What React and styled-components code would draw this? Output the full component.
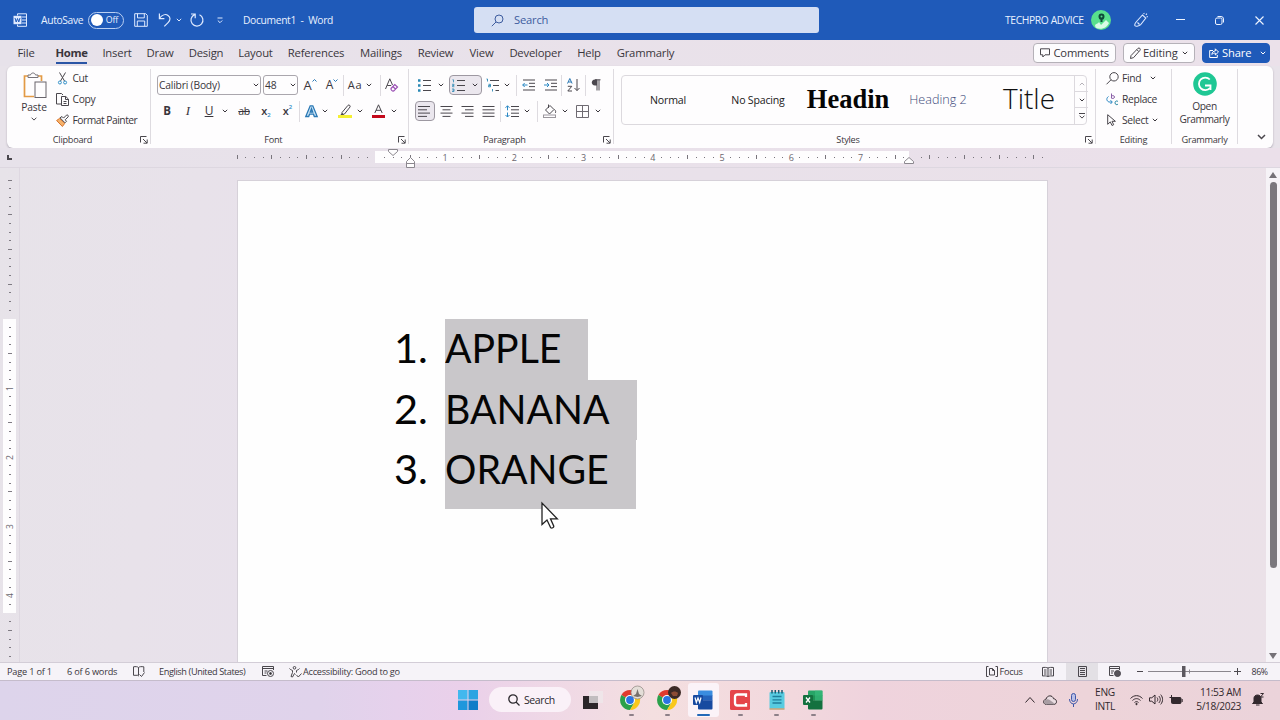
import React from 'react'
import styled, { createGlobalStyle } from 'styled-components'

const GlobalStyle = createGlobalStyle`
  * { box-sizing: border-box; }
  body {
    margin: 0;
    overflow: hidden;
    font-family: "Open Sans", "Noto Sans", sans-serif;
    color: #3a363c;
  }
`

const Window = styled.div`
  width: 1280px;
  height: 720px;
  display: flex;
  flex-direction: column;
  background: #e8e3ea;
  overflow: hidden;
`

// shared pieces

const Svg = styled.svg`
  display: block;
  flex: none;
  fill: none;
  stroke: ${p => p.$c || '#4a474d'};
  stroke-width: ${p => p.$sw || 1};
  overflow: visible;
`

const Label = styled.span`
  flex: none;
  display: block;
  width: ${p => (p.$w ? p.$w + 'px' : 'auto')};
  margin-left: ${p => p.$ml || 0}px;
  font-size: ${p => p.$size || 10.3}px;
  letter-spacing: ${p => p.$ls || 0}px;
  line-height: 14px;
  white-space: nowrap;
`

const Cell = styled.span`
  flex: none;
  width: ${p => p.$w}px;
  height: 100%;
  margin-left: ${p => p.$ml || 0}px;
  display: flex;
  align-items: center;
  justify-content: center;
`

const Separator = styled.span`
  flex: none;
  width: 1px;
  height: 21px;
  margin-left: ${p => p.$ml || 0}px;
  background: #dedbe0;
`

const Icon = ({ w = 14, h = 14, c, sw, children }) => (
  <Svg width={w} height={h} viewBox={`0 0 ${w} ${h}`} $c={c} $sw={sw}>{children}</Svg>
)

const Chevron = ({ w = 8, ml, c = '#3a363c', up }) => (
  <Cell $w={w} $ml={ml}>
    <Icon w={6} h={4} c={c}><path d={up ? 'M.8 3.2 3 1l2.2 2.2' : 'M.8.8 3 3 5.2.8'} /></Icon>
  </Cell>
)

// title bar

const TitleBar = styled.header`
  flex: none;
  height: 40px;
  padding-left: 13px;
  display: flex;
  align-items: center;
  background: #1f5ab9;
  color: #e9f1ff;
`

const Toggle = styled.span`
  flex: none;
  width: 36px;
  height: 17px;
  margin-left: 5px;
  padding: 0 5px 0 2px;
  border: 1px solid #b9cff2;
  border-radius: 9px;
  display: flex;
  align-items: center;
  justify-content: space-between;
  font-size: 8.8px;
  letter-spacing: -0.2px;
  &::before {
    content: '';
    width: 12px;
    height: 12px;
    border-radius: 50%;
    background: #fff;
  }
`

const SearchBox = styled.div`
  flex: none;
  width: 345px;
  height: 26px;
  margin-left: 138px;
  padding-left: 17px;
  display: flex;
  align-items: center;
  border-radius: 3px;
  background: #d5dff3;
  color: #3d5c9e;
`

const Avatar = styled.span`
  margin-left: 6px;
  display: flex;
`

// tabs

const TabBar = styled.nav`
  flex: none;
  height: 26px;
  padding: 0 10px 0 18px;
  display: flex;
  align-items: center;
  gap: 16px;
  background: linear-gradient(90deg, #e7e2ea, #ebe1ea);
`

const Tab = styled.span`
  flex: none;
  width: ${p => p.$w}px;
  height: 22px;
  margin-left: ${p => (p.$active ? 6 : 0)}px;
  display: flex;
  align-items: center;
  justify-content: center;
  font-size: 11.3px;
  letter-spacing: ${p => (p.$active ? -0.35 : -0.2)}px;
  font-weight: ${p => (p.$active ? 700 : 400)};
  border-bottom: 2px solid ${p => (p.$active ? '#2a55a5' : 'transparent')};
  border-top: 1px solid transparent;
  white-space: nowrap;
`

const TabActions = styled.div`
  margin-left: auto;
  display: flex;
  gap: 7px;
`

const ActionButton = styled.span`
  width: ${p => p.$w}px;
  height: 20px;
  padding-left: 6px;
  display: flex;
  align-items: center;
  border: 1px solid ${p => (p.$primary ? '#1f5ab9' : '#b5b1b8')};
  border-radius: 4px;
  background: ${p => (p.$primary ? '#1f5ab9' : '#fdfcfe')};
  color: ${p => (p.$primary ? '#fff' : '#3a363c')};
`

// ribbon

const RibbonWrap = styled.div`
  flex: none;
  height: 82px;
  padding: 0 7px;
  background: #e8e3ea;
`

const Ribbon = styled.section`
  height: 82px;
  display: flex;
  background: #fefdfe;
  border-radius: 6px;
  box-shadow: 0 1px 2px rgba(70, 60, 80, 0.35);
`

const Group = styled.div`
  flex: none;
  position: relative;
  width: ${p => p.$w}px;
  display: flex;
  flex-direction: column;
  &::after {
    content: '';
    position: absolute;
    right: 0;
    top: 3px;
    width: 1px;
    height: 75px;
    background: #dedbe0;
  }
`

const GroupBody = styled.div`
  height: 65px;
  padding-left: ${p => p.$pl || 0}px;
  display: flex;
  flex-direction: ${p => (p.$column ? 'column' : 'row')};
`

const GroupFooter = styled.div`
  height: 17px;
  padding-right: ${p => (p.$launcher ? 13 : 0)}px;
  display: flex;
  align-items: center;
  justify-content: center;
  position: relative;
  font-size: 9.2px;
  letter-spacing: -0.25px;
`

const Launcher = styled.span`
  position: absolute;
  right: 3px;
  top: 5px;
`

const ToolRow = styled.div`
  height: 26px;
  margin-top: ${p => p.$mt || 0}px;
  display: flex;
  align-items: center;
`

const Select = styled.span`
  flex: none;
  width: ${p => p.$w}px;
  height: 20px;
  margin-left: ${p => p.$ml || 0}px;
  padding-left: 1px;
  display: flex;
  align-items: center;
  justify-content: space-between;
  border: 1px solid #aaa6ad;
  border-radius: 3px;
  font-size: 10.3px;
  letter-spacing: -0.2px;
  white-space: nowrap;
`

const Pressed = styled.span`
  flex: none;
  width: ${p => p.$w}px;
  height: 20px;
  margin-left: ${p => p.$ml || 0}px;
  display: flex;
  align-items: center;
  justify-content: center;
  border: 1px solid #9d98a1;
  border-radius: 4px;
  background: #ebe7ee;
`

const Glyph = styled.span`
  font-size: ${p => p.$size || 12}px;
  font-weight: ${p => p.$weight || 400};
  font-style: ${p => (p.$italic ? 'italic' : 'normal')};
  font-family: ${p => (p.$serif ? '"Liberation Serif", serif' : 'inherit')};
  text-decoration: ${p => p.$deco || 'none'};
  letter-spacing: ${p => p.$ls || 0}px;
  line-height: 14px;
  sub, sup {
    font-size: 6px;
    line-height: 0;
    color: #2a88c4;
  }
  sup { vertical-align: 6px; }
  sub { vertical-align: -2px; }
`

const PasteButton = styled.div`
  width: 32px;
  padding-top: 6px;
  display: flex;
  flex-direction: column;
  align-items: center;
  gap: 1px;
  & > svg:last-child { margin-top: 2px; }
`

const CommandList = styled.div`
  margin-left: ${p => p.$ml || 0}px;
  padding-top: 1.5px;
  display: flex;
  flex-direction: column;
`

const Command = styled.div`
  height: 21.6px;
  display: flex;
  align-items: center;
`

const Gallery = styled.div`
  width: 466px;
  height: 50px;
  margin-top: 9px;
  display: flex;
  border: 1px solid #dcd9de;
  border-radius: 4px;
`

const StyleItem = styled.div`
  flex: none;
  width: ${p => p.$w}px;
  margin-left: ${p => p.$ml || 0}px;
  padding-bottom: ${p => p.$pb || 1}px;
  display: flex;
  align-items: center;
  justify-content: center;
  font-family: ${p => p.$font || '"Open Sans", sans-serif'};
  font-size: ${p => p.$size}px;
  font-weight: ${p => p.$weight || 400};
  letter-spacing: ${p => p.$ls || 0}px;
  color: ${p => p.$color || '#1a1a1a'};
  white-space: nowrap;
`

const GalleryScroll = styled.div`
  width: 14px;
  margin-left: auto;
  display: grid;
  grid-template-rows: repeat(3, 1fr);
  border-left: 1px solid #dcd9de;
  & > span {
    width: 13px;
    border-bottom: 1px solid #dcd9de;
  }
  & > span:last-child { border-bottom: 0; }
`

const GrammarlyButton = styled.div`
  width: 66px;
  padding-top: 6px;
  display: flex;
  flex-direction: column;
  align-items: center;
  font-size: 10.2px;
  line-height: 13.3px;
  letter-spacing: -0.4px;
  text-align: center;
  svg { margin-bottom: 3.5px; }
`

const Collapse = styled.div`
  flex: 1;
  padding: 68px 0 0 19px;
`

// document area

const RulerBar = styled.div`
  flex: none;
  position: relative;
  height: 20px;
  display: flex;
  border-bottom: 1px solid #ddd7e0;
  background: linear-gradient(90deg, #e7e2ea, #ebe0ea);
`

const TabStop = styled.span`
  width: 233px;
  padding: 7px 0 0 7px;
`

const HTicks = styled.div`
  display: flex;
  height: 18px;
  background: linear-gradient(#fefdfe, #fefdfe) 142px 3px / 534px 12px no-repeat;
`

const HTick = styled.span`
  flex: none;
  width: 8.66px;
  display: flex;
  align-items: center;
  justify-content: center;
  font-size: 9px;
  color: #6b676e;
  &::before {
    content: '';
    display: ${p => (p.$kind === 'none' ? 'none' : 'block')};
    width: 1px;
    height: ${p => (p.$kind === 'bar' ? 4 : 1)}px;
    background: #79757c;
  }
`

const Marker = styled.span`
  position: absolute;
  left: ${p => p.$x}px;
  top: ${p => p.$y}px;
`

const Workspace = styled.main`
  flex: 1;
  min-height: 0;
  display: flex;
  background: linear-gradient(100deg, #e7e3e9 0%, #e8e2ea 15%, #e8e1eb 24%, #eae1e9 80%, #ebe1e8 100%);
`

const VRuler = styled.div`
  flex: none;
  width: 20px;
  padding-top: 8px;
  display: flex;
  flex-direction: column;
  align-items: center;
  border-right: 1px solid #ded8e1;
  background: linear-gradient(#fefdfe, #fefdfe) 3px 151px / 13px 294px no-repeat;
`

const VTick = styled.span`
  flex: none;
  width: 19px;
  height: 8.66px;
  display: flex;
  align-items: center;
  justify-content: center;
  font-size: 8.5px;
  color: #6b676e;
  i {
    font-style: normal;
    transform: rotate(-90deg);
  }
  &::before {
    content: '';
    display: ${p => (p.$kind === 'none' ? 'none' : 'block')};
    width: ${p => (p.$kind === 'bar' ? 4 : 2)}px;
    height: 1px;
    background: #7f7b83;
  }
`

const Page = styled.article`
  width: 811px;
  margin: 12px 0 0 217px;
  padding: 138px 0 0 156px;
  background: #fefefe;
  border: 1px solid #d6d1d9;
  border-bottom: 0;
`

const List = styled.ol`
  margin: 0;
  padding: 0;
  list-style: none;
  font-family: "Lato", "Open Sans", sans-serif;
  font-size: 41.5px;
  color: #050505;
`

const ListRow = styled.li`
  display: flex;
  height: ${p => p.$h}px;
  line-height: 57px;
`

const Num = styled.span`
  width: 51px;
`

const Selected = styled.span`
  width: ${p => p.$w}px;
  background: #c9c7ca;
`

// narrows Lato to the proportions of Calibri
const Narrow = styled.span`
  display: inline-block;
  transform: scaleX(0.945);
  transform-origin: left;
`

const Scrollbar = styled.div`
  width: 14px;
  margin-left: auto;
  padding: 4px 0 3px;
  display: flex;
  flex-direction: column;
  align-items: center;
  gap: 4px;
  background: #f6f3f7;
`

const Thumb = styled.span`
  width: 7px;
  height: 386px;
  margin-bottom: auto;
  border-radius: 4px;
  background: #7b777d;
`

const Pointer = styled.span`
  position: absolute;
  left: 541px;
  top: 502px;
`

// status bar

const StatusBar = styled.footer`
  flex: none;
  height: 19px;
  padding-left: 7px;
  display: flex;
  align-items: center;
  border-top: 1px solid #d3cdd7;
  border-bottom: 1px solid #c5bccb;
  background: #f6f3f8;
`

const StatusRight = styled.div`
  width: 294px;
  height: 100%;
  margin-left: auto;
  display: flex;
  align-items: center;
`

const ActiveView = styled.span`
  width: 32px;
  height: 17px;
  display: flex;
  align-items: center;
  justify-content: center;
  background: #e3e0e5;
`

// windows taskbar

const Taskbar = styled.footer`
  flex: none;
  height: 39px;
  padding: 0 0 2px 458px;
  display: flex;
  align-items: center;
  background: linear-gradient(90deg, #ddd4eb 0%, #e0d3eb 25%, #e6d1ec 31%, #ead0ea 36%, #efd8e6 43%, #f4dfe0 51%, #f2d8dd 62%, #efd3dd 68%, #edd4d9 85%, #ebd3da 100%);
`

const SearchPill = styled.div`
  flex: none;
  width: 82px;
  height: 25px;
  margin-left: 11px;
  padding-left: 19px;
  display: flex;
  align-items: center;
  gap: 4px;
  border-radius: 13px;
  background: #faf1f8;
  color: #2b282d;
`

const TaskButton = styled.div`
  flex: none;
  width: ${p => p.$w || 36.6}px;
  height: 34px;
  margin-left: ${p => p.$ml || 0}px;
  padding: 7px 0 1px;
  display: flex;
  flex-direction: column;
  align-items: center;
  justify-content: space-between;
  border-radius: 3px;
  background: ${p => (p.$active ? '#fbf3f8' : 'transparent')};
  &::after {
    content: '';
    width: ${p => (p.$active ? 13 : 5)}px;
    height: 2px;
    border-radius: 1px;
    background: ${p => (p.$active ? '#2268b8' : '#8d8088')};
    visibility: ${p => (p.$idle ? 'hidden' : 'visible')};
  }
`

const Tray = styled.div`
  width: 256px;
  height: 100%;
  margin-left: auto;
  display: flex;
  align-items: center;
  color: #33292e;
`

const TrayText = styled.div`
  flex: none;
  width: ${p => p.$w}px;
  margin-left: ${p => p.$ml || 0}px;
  font-size: 10.2px;
  letter-spacing: ${p => p.$ls || 0}px;
  line-height: 13.3px;
  text-align: ${p => p.$align};
  white-space: nowrap;
`

const Footer = ({ children }) => (
  <GroupFooter $launcher>
    {children}
    <Launcher>
      <Icon w={8} h={8}><path d="M.5 6.5v-6h6M3 3l4 4M7.2 3.5v3.7H3.5" /></Icon>
    </Launcher>
  </GroupFooter>
)

// text lines at given widths, used for every alignment icon
const Lines = ({ rows }) => (
  <Icon w={13} h={13}>
    {rows.map(([a, b], i) => <path key={i} d={`M${a} ${1.5 + i * 3.3}H${b}`} />)}
  </Icon>
)

const TABS = [
  ['File', 16], ['Home', 31], ['Insert', 28], ['Draw', 26], ['Design', 34], ['Layout', 33],
  ['References', 56], ['Mailings', 42], ['Review', 35], ['View', 25], ['Developer', 51],
  ['Help', 24], ['Grammarly', 57],
]

const TopBar = () => (
  <TitleBar>
    <Icon w={14} h={14} c="#dfeaff">
      <path d="M4.500 2.500V.8h9v12.500h-9v-1.800M9 4h4.500M9 7h4.500M9 10h4.500" />
      <rect x="0.5" y="2.8" width="8" height="8.4" fill="#dfeaff" stroke="none" />
      <path d="m2 5 1.200 4L4.500 5.500 5.800 9 7 5" stroke="#1f5ab9" />
    </Icon>
    <Label $w={42} $ml={14} $ls={-0.35}>AutoSave</Label>
    <Toggle>Off</Toggle>
    <Cell $w={14} $ml={10}>
      <Icon c="#dfeaff"><path d="M.7.7h11l1.600 1.600v11H.7zM3.500.7v4.200h6.800V.7M3.300 13.300V8h7.400v5.300" /></Icon>
    </Cell>
    <Cell $w={14} $ml={10}>
      <Icon c="#dfeaff" sw={1.2}><path d="M1.400.6v5h5M1.400 5.400C4 2 7.500.6 10 2.400c2.800 2 2.400 4.800.3 6.900l-4 4" /></Icon>
    </Cell>
    <Chevron ml={3} c="#dfeaff" />
    <Cell $w={14} $ml={7}>
      <Icon c="#dfeaff" sw={1.2}><path d="M1 1h4.200v4.200M4.600 1.600A6 6 0 1 0 9.500 1.700" /></Icon>
    </Cell>
    <Cell $w={8} $ml={12}>
      <Icon w={6} h={7} c="#dfeaff"><path d="M.5 1h5M.8 3.500 3 5.700l2.200-2.200" /></Icon>
    </Cell>
    <Label $w={93} $ml={19} $ls={-0.35}>Document1&nbsp; -&nbsp; Word</Label>
    <SearchBox>
      <Icon w={13} h={13} c="#3d5c9e"><circle cx="8" cy="5" r="4" /><path d="M5 8 .8 12.200" /></Icon>
      <Label $ml={10} $size={11.2} $ls={-0.2}>Search</Label>
    </SearchBox>
    <Label $w={80} $ml={186} $ls={-0.38}>TECHPRO ADVICE</Label>
    <Avatar>
      <Icon w={20} h={20}>
        <circle cx="10" cy="10" r="10" fill="#58e08d" stroke="none" />
        <path d="M4 15c2-2 3-1 4-3l2 3 5-5 3 3a9.500 9.500 0 0 1-13.500 4.500z" fill="#d9fbe6" stroke="none" />
        <path d="M10.500 3.500c2 0 3 1.300 3 3s-1 3.600-3 3.600-3-1.900-3-3.600 1-3 3-3zM9.500 9.500h2V12h-2z" fill="#0e4a38" stroke="none" />
        <circle cx="10.5" cy="6.5" r="1" fill="#58e08d" stroke="none" />
      </Icon>
    </Avatar>
    <Cell $w={14} $ml={23}>
      <Icon c="#dfeaff"><path d="M3 8 8.500 2l3.300 3-5 6.500c-1 1.500-4.800 2-5.600 1.400C.3 12 1.800 9.300 3 8zM9.800 0l.3 1.200M12.900.6l-1 1.300M14 3.800l-1.400-.1M3.500 9.500l2 2" strokeWidth="1.1" /></Icon>
    </Cell>
    <Cell $w={10} $ml={27}><Icon w={9} h={2} c="#eef4ff"><path d="M0 .5h9" /></Icon></Cell>
    <Cell $w={10} $ml={29.5}>
      <Icon w={9} h={9} c="#eef4ff"><rect x=".5" y="2" width="6.5" height="6.5" rx="1.5" /><path d="M2.500.5H6A2.500 2.500 0 0 1 8.500 3v3.500" /></Icon>
    </Cell>
    <Cell $w={10} $ml={30}><Icon w={9} h={9} c="#eef4ff" sw={1.1}><path d="m.5.5 8 8M8.500.5l-8 8" /></Icon></Cell>
  </TitleBar>
)

const Tabs = () => (
  <TabBar>
    {TABS.map(([name, w]) => (
      <Tab key={name} $w={w} $active={name === 'Home'}>{name}</Tab>
    ))}
    <TabActions>
      <ActionButton $w={83}>
        <Icon w={10} h={10}><path d="M.5.8h9v6H5L2.800 9V6.800H.5z" /></Icon>
        <Label $ml={3.5} $size={11.2} $ls={-0.2}>Comments</Label>
      </ActionButton>
      <ActionButton $w={72}>
        <Icon w={11} h={12}><path d="M1 8.600 8 1.300c1.300-1 3 .6 2 2L3.600 10.600.5 11.500zM6.800 2.600l2 2" /></Icon>
        <Label $ml={2} $size={11.2} $ls={-0.15}>Editing</Label>
        <Chevron ml={3} />
      </ActionButton>
      <ActionButton $w={68} $primary>
        <Icon w={10} h={10} c="#fff"><path d="M4 2.500H.7v7h7.600V7M2.800 6.500C3 4 4.500 3 6.300 3V.8L9.500 4 6.300 7V5C4.800 5 3.800 5.400 2.800 6.500z" /></Icon>
        <Label $ml={3} $size={11.2} $ls={-0.15}>Share</Label>
        <Chevron ml={8} c="#fff" />
      </ActionButton>
    </TabActions>
  </TabBar>
)

const ClipboardGroup = () => (
  <Group $w={144}>
    <GroupBody $pl={11}>
      <PasteButton>
        <Icon w={24} h={27}>
          <path d="M6.500 4h-4v20.500h9.500M15.500 4h4v5" stroke="#e39a45" strokeWidth="1.7" />
          <path d="M6 5.500V3h2.500C9 .3 13 .3 13.500 3H16v2.500z" fill="#fefdfe" stroke="#77737a" />
          <rect x="13" y="10" width="11" height="15.5" fill="#fefdfe" stroke="#68646b" />
        </Icon>
        <Label $ls={-0.15}>Paste</Label>
        <Icon w={6} h={4}><path d="M.6.7 3 3.100 5.400.7" /></Icon>
      </PasteButton>
      <CommandList $ml={6}>
        <Command>
          <Cell $w={13}>
            <Icon w={9} h={13}><path d="M1.500.5 6.500 9M7.500.5 2.500 9" /><g stroke="#2f8fc8"><circle cx="1.9" cy="10.5" r="1.5" /><circle cx="7.1" cy="10.5" r="1.5" /></g></Icon>
          </Cell>
          <Label $ml={3.5} $ls={-0.4}>Cut</Label>
        </Command>
        <Command>
          <Cell $w={13}>
            <Icon w={13} h={13}><path d="M5 11H.5V.5h5L7 2" /><path d="M5.500 3.500h4.300l2.700 2.700v6.300h-7zM9.500 3.500v3h3M7.500 8.500h3M7.500 10.500h3" /></Icon>
          </Cell>
          <Label $ml={3.5} $ls={-0.35}>Copy</Label>
        </Command>
        <Command>
          <Cell $w={13}>
            <Icon w={13} h={13}>
              <path d="M3.500 4.500.6 6.500l5.800 6 2.400-3.200z" fill="#f5b26c" stroke="#d9742b" />
              <path d="m4 3.800 5 5 1.500-1.500-1.300-1.500 3-3c.8-1-.8-2.500-1.800-1.600L7.500 4.100 6 2.500z" fill="#fefdfe" />
            </Icon>
          </Cell>
          <Label $ml={3.5} $ls={-0.5}>Format Painter</Label>
        </Command>
      </CommandList>
    </GroupBody>
    <Footer>Clipboard</Footer>
  </Group>
)

const FontGroup = () => (
  <Group $w={257.5}>
    <GroupBody $pl={6} $column>
      <ToolRow $mt={6}>
        <Select $w={104}>Calibri (Body)<Chevron /></Select>
        <Select $w={35} $ml={2}>48<Chevron /></Select>
        <Cell $w={22} $ml={1}>
          <Glyph $size={13}>A</Glyph>
          <Icon w={5} h={12} c="#2a78b4"><path d="M.5 2.500 2.500.500 4.500 2.500" /></Icon>
        </Cell>
        <Cell $w={22}>
          <Glyph $size={12}>A</Glyph>
          <Icon w={5} h={12} c="#2a78b4"><path d="M.5.500 2.500 2.500 4.500.500" /></Icon>
        </Cell>
        <Separator />
        <Cell $w={20} $ml={1}><Glyph $size={11} $ls={0.6}>Aa</Glyph></Cell>
        <Chevron />
        <Separator $ml={7} />
        <Cell $w={20}>
          <Icon w={13} h={14}>
            <path d="M.5 11 4.800.8 7.500 7M2.200 7.500h4" />
            <path d="m6 10.500 3.800-4 2.700 2.500-3.800 4c-1.300.5-3-1.200-2.700-2.500zM7.800 8.500l2.700 2.500" stroke="#9a4fb4" strokeWidth="1.2" />
          </Icon>
        </Cell>
      </ToolRow>
      <ToolRow>
        <Cell $w={20}><Glyph $weight={700} $size={11.5}>B</Glyph></Cell>
        <Cell $w={22}><Glyph $italic $serif $size={13}>I</Glyph></Cell>
        <Cell $w={20}><Glyph $deco="underline">U</Glyph></Cell>
        <Chevron w={12} />
        <Cell $w={26}><Glyph $deco="line-through" $size={10.5} $ls={-0.4}>ab</Glyph></Cell>
        <Cell $w={18}><Glyph $weight={600} $size={11}>x<sub>2</sub></Glyph></Cell>
        <Cell $w={23} $ml={1}><Glyph $weight={600} $size={11}>x<sup>2</sup></Glyph></Cell>
        <Separator />
        <Cell $w={22}>
          <Icon w={13} h={13}>
            <path d="M.8 11.500 5.200.8h2.600l4.400 10.700H9.300l-.8-2.300H4.500l-.8 2.300zM5.300 7h2.400L6.500 3.600z" fill="#cfe6f7" stroke="#2a78b4" strokeWidth="1.3" />
          </Icon>
        </Cell>
        <Chevron ml={-1} />
        <Cell $w={22} $ml={5}>
          <Icon w={14} h={14}>
            <path d="m4 8.500 6-7.200c1-1 2.800.5 2 1.700L6.500 10l-2 .5zM4.500 9 3 10.500h2.500" />
            <rect x="0" y="11" width="14" height="3" fill="#f5f032" stroke="none" />
          </Icon>
        </Cell>
        <Chevron />
        <Cell $w={24} $ml={2}>
          <Icon w={13} h={14}>
            <path d="M2.800 9 6.500.8 10.200 9M4 6.300h5" />
            <rect x="0" y="11" width="13" height="3" fill="#c40a1c" stroke="none" />
          </Icon>
        </Cell>
        <Chevron />
      </ToolRow>
    </GroupBody>
    <Footer>Font</Footer>
  </Group>
)

const ParagraphGroup = () => (
  <Group $w={205}>
    <GroupBody $pl={6} $column>
      <ToolRow $mt={6}>
        <Cell $w={20}>
          <Icon w={13} h={13}><path d="M5 1.500h8M5 6.500h8M5 11.500h8" /><path d="M0 1.500h2.500M0 6.500h2.500M0 11.500h2.500" stroke="#2a88b4" strokeWidth="2.5" /></Icon>
        </Cell>
        <Chevron ml={2} />
        <Pressed $w={33} $ml={4}>
          <Icon w={13} h={13}>
            <path d="M5 1.500h8M5 6.500h8M5 11.500h8" />
            <path d="M.5.8h1v2.500M0 5.300h2v1.200H.5v1.200h1.800M0 10h2v2.500H0M.5 11.200H2" stroke="#2a88b4" strokeWidth=".8" />
          </Icon>
          <Chevron ml={6} />
        </Pressed>
        <Cell $w={22}>
          <Icon w={13} h={13}>
            <path d="M4 1.500h9M7 6.500h6M9.500 11.500H13" />
            <path d="M.5 0h1v2.500M2.500 5.300h2v2.500h-2V6.500h2M6.500 10v2.500" stroke="#2a88b4" strokeWidth=".9" />
          </Icon>
        </Cell>
        <Chevron ml={-1} />
        <Separator $ml={5} />
        <Cell $w={23}>
          <Icon w={13} h={12}><path d="M1 1h12M7 4.300h6M7 7.600h6M1 11h12" /><path d="M5.500 6H.7M2.700 4 .7 6l2 2" stroke="#2a88c4" /></Icon>
        </Cell>
        <Cell $w={21}>
          <Icon w={13} h={12}><path d="M1 1h12M7 4.300h6M7 7.600h6M1 11h12" /><path d="M0 6h5M3 4l2 2-2 2" stroke="#2a88c4" /></Icon>
        </Cell>
        <Separator />
        <Cell $w={23}>
          <Icon w={13} h={14}>
            <path d="m.5 5.500 2.300-5 2.300 5M1.300 4h3" stroke="#2a78b4" />
            <path d="M.8 8.300h4L.8 13H5M10 1v11.500M7.500 10l2.500 2.600 2.500-2.600" />
          </Icon>
        </Cell>
        <Separator />
        <Cell $w={21}>
          <Icon w={10} h={12}><path d="M6 11.500V1M8 11.500V1M9.500.8H4" /><path d="M6 .5H4C-.3.5-.3 6.500 4 6.500h2z" fill="#4a474d" stroke="none" /></Icon>
        </Cell>
      </ToolRow>
      <ToolRow>
        <Pressed $w={20}><Lines rows={[[0, 12], [0, 9], [0, 12], [0, 9]]} /></Pressed>
        <Cell $w={21} $ml={1}><Lines rows={[[0.5, 12.5], [2.5, 10.5], [0.5, 12.5], [2.5, 10.5]]} /></Cell>
        <Cell $w={21.5}><Lines rows={[[0.5, 12.5], [4, 12.5], [0.5, 12.5], [4, 12.5]]} /></Cell>
        <Cell $w={21.5}><Lines rows={[[0.5, 12.5], [0.5, 12.5], [0.5, 12.5], [0.5, 12.5]]} /></Cell>
        <Separator />
        <Cell $w={23}>
          <Icon w={14} h={13}><path d="M6 1.500h8M6 4.800h8M6 8.200h8M6 11.500h8" /><path d="M2.500.8v4.500M.5 2.800l2-2 2 2M2.500 7.500V12M.5 10l2 2 2-2" stroke="#2a88c4" /></Icon>
        </Cell>
        <Chevron w={6} />
        <Separator $ml={7} />
        <Cell $w={24}>
          <Icon w={14} h={14}><path d="m2.500 6 4.500-4.500 4 4L6.500 10zM5.500.5V4M11.500 5.500c1.500 1.500 1.300 2.500.8 3.500" /><rect x=".5" y="11" width="12" height="2.5" stroke="#9a969d" /></Icon>
        </Cell>
        <Chevron w={6} />
        <Cell $w={20} $ml={5}>
          <Icon w={13} h={13} c="#6f6b72"><path d="M.5.5h12v12H.5zM6.500.5v12M.5 6.500h12" /></Icon>
        </Cell>
        <Chevron ml={1} />
      </ToolRow>
    </GroupBody>
    <Footer>Paragraph</Footer>
  </Group>
)

const StylesGroup = () => (
  <Group $w={482}>
    <GroupBody $pl={7.5}>
      <Gallery>
        <StyleItem $w={90} $ml={1} $size={10.6} $ls={-0.15}>Normal</StyleItem>
        <StyleItem $w={90} $size={10.6} $ls={-0.2}>No Spacing</StyleItem>
        <StyleItem $w={90} $size={26.5} $weight={700} $color="#050505" $font={'"Liberation Serif", serif'}>Headin</StyleItem>
        <StyleItem $w={90} $size={12.6} $weight={300} $color="#3c4a7a">Heading 2</StyleItem>
        <StyleItem $w={90} $ml={1} $pb={4} $size={28} $weight={300} $color="#111">Title</StyleItem>
        <GalleryScroll>
          <Chevron w={13} up c="#b5b1b8" />
          <Chevron w={13} />
          <Cell $w={13}><Icon w={6} h={6}><path d="M0 .5h6M.6 2.700 3 5.100l2.400-2.400" /></Icon></Cell>
        </GalleryScroll>
      </Gallery>
    </GroupBody>
    <Footer>Styles</Footer>
  </Group>
)

const EditingGroup = () => (
  <Group $w={76}>
    <GroupBody $pl={10.5}>
      <CommandList>
        <Command>
          <Cell $w={13}><Icon w={13} h={13}><circle cx="8" cy="4.8" r="4.2" /><path d="M5 7.800.5 12.300" /></Icon></Cell>
          <Label $ml={3} $w={27} $ls={-0.35}>Find</Label>
          <Chevron />
        </Command>
        <Command>
          <Cell $w={13}>
            <Icon w={13} h={13}>
              <path d="M5.500.5v5M5.500 3.300c.5-1 3-1 3 .7s-2.500 2-3 .7" stroke="#8a5fa8" />
              <path d="M2.500 3.500C.2 5 .2 8 3 9h3M4.500 7.200 6.300 9l-1.800 2" stroke="#2a88c4" />
              <path d="M12 8.500c-1-1-3-.7-3 1.300s2 2.300 3 1.300" stroke="#2a88a4" />
            </Icon>
          </Cell>
          <Label $ml={3} $ls={-0.35}>Replace</Label>
        </Command>
        <Command>
          <Cell $w={11}><Icon w={9} h={12}><path d="M.7.7v9.600l2.600-2.400L5 11.500l1.700-.8L5 7.300h3.400z" /></Icon></Cell>
          <Label $ml={5} $w={28.5} $ls={-0.35}>Select</Label>
          <Chevron />
        </Command>
      </CommandList>
    </GroupBody>
    <GroupFooter>Editing</GroupFooter>
  </Group>
)

const GrammarlyGroup = () => (
  <Group $w={66}>
    <GroupBody>
      <GrammarlyButton>
        <Icon w={24} h={24}>
          <circle cx="12" cy="12" r="11.8" fill="#1fc794" stroke="none" />
          <path d="M16.800 7.500A6.300 6.300 0 1 0 17 16M12 13.500h5.500V18" stroke="#fff" strokeWidth="1.8" />
        </Icon>
        <span>Open</span>
        <span>Grammarly</span>
      </GrammarlyButton>
    </GroupBody>
    <GroupFooter>Grammarly</GroupFooter>
  </Group>
)

const range = (from, to) => Array.from({ length: to - from + 1 }, (_, i) => from + i)

// kind of mark standing at every eighth of an inch
const tickKind = (n, max) => {
  if (n === 0 || n === max) return 'none'
  if (n > 0 && n < max && n % 8 === 0) return 'none'
  return n % 4 === 0 ? 'bar' : 'dot'
}

const HorizontalRuler = () => (
  <RulerBar>
    <TabStop><Icon w={5} h={5} sw={2}><path d="M1 0v4h4" /></Icon></TabStop>
    <HTicks>
      {range(-16, 77).map(n => (
        <HTick key={n} $kind={tickKind(n, 62)}>{n > 0 && n < 62 && n % 8 === 0 ? n / 8 : ''}</HTick>
      ))}
    </HTicks>
    <Marker $x={388} $y={1}><Icon w={10} h={7} c="#8b878e"><path d="M.5.5h9v2L5 6.500.5 2.500z" fill="#fefdfe" /></Icon></Marker>
    <Marker $x={406} $y={9}><Icon w={9} h={11} c="#8b878e"><path d="M.5 10.500v-6l4-4 4 4v6zM.5 6.500h8" fill="#fefdfe" /></Icon></Marker>
    <Marker $x={904} $y={9}><Icon w={10} h={7} c="#8b878e"><path d="M.5 6.500v-2L5 .5l4.500 4v2z" fill="#fefdfe" /></Icon></Marker>
  </RulerBar>
)

const LIST = [
  { text: 'APPLE', w: 143, h: 60.5 },
  { text: 'BANANA', w: 192, h: 60.5 },
  { text: 'ORANGE', w: 191, h: 69 },
]

const DocumentArea = () => (
  <Workspace>
    <VRuler>
      {range(-16, 39).map(n => (
        <VTick key={n} $kind={tickKind(n, 34)}>{n > 0 && n < 34 && n % 8 === 0 && <i>{n / 8}</i>}</VTick>
      ))}
    </VRuler>
    <Page>
      <List>
        {LIST.map((row, i) => (
          <ListRow key={row.text} $h={row.h}>
            <Num>{i + 1}.</Num>
            <Selected $w={row.w}><Narrow>{row.text}</Narrow></Selected>
          </ListRow>
        ))}
      </List>
    </Page>
    <Scrollbar>
      <Icon w={8} h={6}><path d="M0 6 4 0l4 6z" fill="#757177" stroke="none" /></Icon>
      <Thumb />
      <Icon w={8} h={6}><path d="M0 0h8L4 6z" fill="#757177" stroke="none" /></Icon>
    </Scrollbar>
  </Workspace>
)

const Status = () => (
  <StatusBar>
    <Label $w={60} $size={9.2} $ls={-0.2}>Page 1 of 1</Label>
    <Label $w={66} $size={9.2} $ls={-0.2}>6 of 6 words</Label>
    <Icon w={12} h={11}><path d="M5.500 9.500v-8C4.500.5 2.500.5.5.8v8.500h4.300l1 .8M5.500 1.500C6.500.5 8.500.5 10.800.8V6M6.500 8.500l2 2 3-4" /></Icon>
    <Label $w={103} $ml={14} $size={9.2} $ls={-0.4}>English (United States)</Label>
    <Icon w={12} h={11}><path d="M4.500 9.500h-4v-9h11V4M.5 2.500h11M2.500 5h3M2.500 7h2" /><circle cx="8.5" cy="7.5" r="3" /><circle cx="8.5" cy="7.5" r="1" fill="#333" /></Icon>
    <Cell $w={13} $ml={15}>
      <Icon w={13} h={12}><circle cx="5.5" cy="1.8" r="1.3" /><path d="M.5 2.500c1 1.500 2.500 1.500 3 2v2l-1.500 4 1.500.5 2-3.500 1 1M10.500 2.500c-1 1.500-2.500 1.500-3 2v2M7.500 9l1.800 2 3.200-3.500" /></Icon>
    </Cell>
    <Label $ml={1} $size={9.2} $ls={-0.27}>Accessibility: Good to go</Label>
    <StatusRight>
      <Icon w={12} h={11}><path d="M2.500.5h-2v10h2M9.500.5h2v10h-2M3.500 2.500h3l2 2V9h-5zM6.500 2.500v2h2" /></Icon>
      <Label $ml={1.5} $w={42.5} $size={9.2} $ls={-0.3}>Focus</Label>
      <Icon w={12} h={10}><path d="M6 9.500V1C4.500.3 2.500.3.5.5V9c2-.2 4-.2 5.500.5C7.500 8.800 9.500 8.800 11.500 9V.5C9.500.3 7.500.3 6 1M2 3h2.500M2 5h2.500M2 7h2.500M7.500 3H10M7.500 5H10M7.500 7H10" /></Icon>
      <Cell $w={12} />
      <ActiveView>
        <Icon w={9} h={11}><path d="M.5.5h8v10h-8zM2 2.500h5M2 4.500h5M2 6.500h5M2 8.500h5" /></Icon>
      </ActiveView>
      <Cell $w={12} $ml={11}>
        <Icon w={12} h={11}><path d="M4.500 9.500h-4v-9h10V4M.5 2.500h10M2 5h3M2 7h2" /><circle cx="8.5" cy="7.5" r="3" fill="#57535a" /></Icon>
      </Cell>
      <Cell $w={7} $ml={15}><Icon w={6} h={2}><path d="M0 .5h6" /></Icon></Cell>
      <Cell $w={83} $ml={4.5}>
        <Icon w={83} h={11} c="#8a868d">
          <path d="M0 5.500h83M41.500 3.500v4" />
          <rect x="34" y="0" width="3.5" height="11" fill="#5c585f" stroke="none" />
        </Icon>
      </Cell>
      <Cell $w={7} $ml={3}><Icon w={7} h={7}><path d="M0 3.500h7M3.500 0v7" /></Icon></Cell>
      <Label $ml={11} $size={8.8} $ls={-0.35}>86%</Label>
    </StatusRight>
  </StatusBar>
)

const Chrome = ({ dark }) => (
  <Icon w={24} h={20}>
    <g stroke="none">
      <path d="M11 10 2.400 5a10 10 0 0 1 17.300 0z" fill="#e13a2e" />
      <path d="M11 10 2.400 5A10 10 0 0 0 11 20l4.500-7.500z" fill="#2ba14b" />
      <path d="M11 5h8.700A10 10 0 0 1 11 20l4.500-7.500z" fill="#f9c81c" />
      <circle cx="11" cy="10" r="5" fill="#fff" />
      <circle cx="11" cy="10" r="3.9" fill="#2b74e2" />
      <circle cx="18.5" cy="2.5" r="6.5" fill={dark ? '#3c2a26' : '#e4ded8'} stroke={dark ? 'none' : '#8d8580'} strokeWidth=".7" />
      {dark
        ? <path d="M15 3c2-2 5-2 7 0l-1 3h-4z" fill="#8c4c34" />
        : <path d="m14 6 3-2 1.500-5L20 4l3 2-4.500 1z" fill="#77706b" />}
    </g>
  </Icon>
)

const OfficeIcon = ({ dark, mid, light, sheet, children }) => (
  <Icon w={20} h={20}>
    <g stroke="none">
      <path d="M6 .5h12.500a1 1 0 0 1 1 1V6H5V1.500a1 1 0 0 1 1-1z" fill={light} />
      <path d="M5 5.500h14.500v5H5z" fill={mid} />
      <path d="M5 10.300h14.500v8.200a1 1 0 0 1-1 1H6a1 1 0 0 1-1-1z" fill={dark} />
      {sheet && <path d="M12 .5h7.500v10H12z" fill={sheet} opacity=".6" />}
      <rect x="0" y="5" width="10" height="10" rx="1" fill={dark} />
    </g>
    {children}
  </Icon>
)

const TaskBar = () => (
  <Taskbar>
    <Icon w={20} h={20}>
      <g stroke="none">
        <path d="M0 0h9.500v9.500H0z" fill="#42b8ee" /><path d="M10.500 0H20v9.500h-9.500z" fill="#2ba4e2" />
        <path d="M0 10.500h9.500V20H0z" fill="#1f97dc" /><path d="M10.500 10.500H20V20h-9.500z" fill="#0f7cc8" />
      </g>
    </Icon>
    <SearchPill>
      <Icon w={12} h={12} c="#2b282d" sw={1.3}><circle cx="5" cy="5" r="4.2" /><path d="m8 8 3.500 3.500" /></Icon>
      <Label $size={10.5} $ls={-0.4}>Search</Label>
    </SearchPill>
    <TaskButton $idle $w={36} $ml={4}>
      <Icon w={20} h={20}>
        <g stroke="none">
          <path d="M0 6h15v13H0z" fill="#2b2629" />
          <path d="M6 1h14v12H6z" fill="#eee6e9" opacity=".95" />
          <path d="M6 6h9v7H6z" fill="#c1bdbf" />
        </g>
      </Icon>
    </TaskButton>
    <TaskButton $ml={2}><Chrome /></TaskButton>
    <TaskButton><Chrome dark /></TaskButton>
    <TaskButton $active $w={31} $ml={1.8}>
      <OfficeIcon dark="#184aa0" mid="#2464bd" light="#3a8de0">
        <path d="m2 7.500 1.300 5L5 8l1.700 4.500L8 7.500" stroke="#fff" strokeWidth="1.2" />
      </OfficeIcon>
    </TaskButton>
    <TaskButton $ml={3}>
      <Icon w={20} h={20}>
        <rect width="20" height="20" rx="1.5" fill="#e5454a" stroke="none" />
        <path d="M16 7V4.500H7.500Q5 4.500 5 7v6q0 2.500 2.500 2.500H16V13" stroke="#fff" strokeWidth="2.3" />
      </Icon>
    </TaskButton>
    <TaskButton>
      <Icon w={16} h={20}>
        <rect x=".5" y="2" width="15" height="17" rx="1" fill="#58cbe0" stroke="none" />
        <path d="M.5 19h15" stroke="#c9a57c" strokeWidth="1.6" />
        <path d="M3 0v3.500M6.300 0v3.500M9.700 0v3.500M13 0v3.500" stroke="#1c5a70" strokeWidth="1.5" />
        <path d="M3.500 6.500h9M3.500 9.800h9M3.500 13h9" stroke="#1f7f9c" strokeWidth="1.3" />
      </Icon>
    </TaskButton>
    <TaskButton>
      <OfficeIcon dark="#14713f" mid="#1d9355" light="#27a567" sheet="#3cc080">
        <path d="m3 7.500 4 5M7 7.500l-4 5" stroke="#fff" strokeWidth="1.3" />
      </OfficeIcon>
    </TaskButton>
    <Tray>
      <Cell $w={12}><Icon w={10} h={6} c="#33292e"><path d="m.5 5.500 4.500-5 4.500 5" /></Icon></Cell>
      <Cell $w={16} $ml={6}>
        <Icon w={14} h={10} c="#33292e">
          <path d="M3.500 9.500C-.2 9.500-.2 4.500 3 4.200 4 0 9.500-.3 10.500 3.700c4 .3 4 5.800 0 5.800z" fill="#eadde2" />
          <path d="M3 4.500c2-.7 3.500 0 9 4.500l-2 .5H3.500C.5 9.300.5 5 3 4.500z" fill="#a89da3" stroke="none" />
        </Icon>
      </Cell>
      <Cell $w={12} $ml={9}>
        <Icon w={9} h={14} c="#3d56a8"><rect x="2.5" y=".5" width="4" height="8" rx="2" fill="#b9bfe6" /><path d="M.5 6c0 6.500 8 6.500 8 0M4.500 11v3" /></Icon>
      </Cell>
      <TrayText $w={30} $ml={11} $align="center" $ls={-0.3}>ENG<br />INTL</TrayText>
      <Cell $w={14} $ml={9}>
        <Icon w={13} h={10} c="#33292e"><path d="M.5 3.500c3.500-3.800 8.500-3.800 12 0M2.500 5.500c2.500-2.500 5.500-2.500 8 0M4.500 7.500c1.300-1.200 2.700-1.200 4 0" /><circle cx="6.5" cy="9" r=".7" fill="#33292e" /></Icon>
      </Cell>
      <Cell $w={14} $ml={6}>
        <Icon w={14} h={11} c="#33292e"><path d="M.5 3.800h2.300L6 1v9L2.800 7.200H.5zM8 3.500c1 1.300 1 2.700 0 4M9.800 2c2 2.300 2 4.700 0 7M11.700.6c2.500 3 2.500 6.800 0 9.800" /></Icon>
      </Cell>
      <Cell $w={14} $ml={6}>
        <Icon w={14} h={10} c="#33292e"><rect x="2.5" y="2.5" width="9.5" height="6" rx="1" fill="#33292e" /><path d="M13.200 4v3M2.500 0v6M.5 2.500h4" /></Icon>
      </Cell>
      <TrayText $w={53} $ml={5} $align="right" $ls={-0.4}>11:53 AM<br />5/18/2023</TrayText>
      <Cell $w={12} $ml={11}>
        <Icon w={12} h={13} c="#33292e"><path d="M2 9V5c0-4 7-4 7 0v4l1.500 1.500H.5zM4 12h3.500" fill="#33292e" /><path d="M8.500.5h3L8.500 4h3" /></Icon>
      </Cell>
    </Tray>
  </Taskbar>
)

function App() {
  return (
    <Window>
      <GlobalStyle />
      <TopBar />
      <Tabs />
      <RibbonWrap>
        <Ribbon>
          <ClipboardGroup />
          <FontGroup />
          <ParagraphGroup />
          <StylesGroup />
          <EditingGroup />
          <GrammarlyGroup />
          <Collapse><Icon w={9} h={6} sw={1.5}><path d="m1 1 3.500 3.500L8 1" /></Icon></Collapse>
        </Ribbon>
      </RibbonWrap>
      <HorizontalRuler />
      <DocumentArea />
      <Status />
      <TaskBar />
      {/* mouse pointer over the page */}
      <Pointer>
        <Icon w={18} h={28} c="#222" sw={1.3}><path d="M1 1v21.500l5-4.500 3.700 7.800c1.300.7 3.200-.2 3.100-1.600L9.500 16.800h6.800z" fill="#fff" /></Icon>
      </Pointer>
    </Window>
  )
}

export default App
